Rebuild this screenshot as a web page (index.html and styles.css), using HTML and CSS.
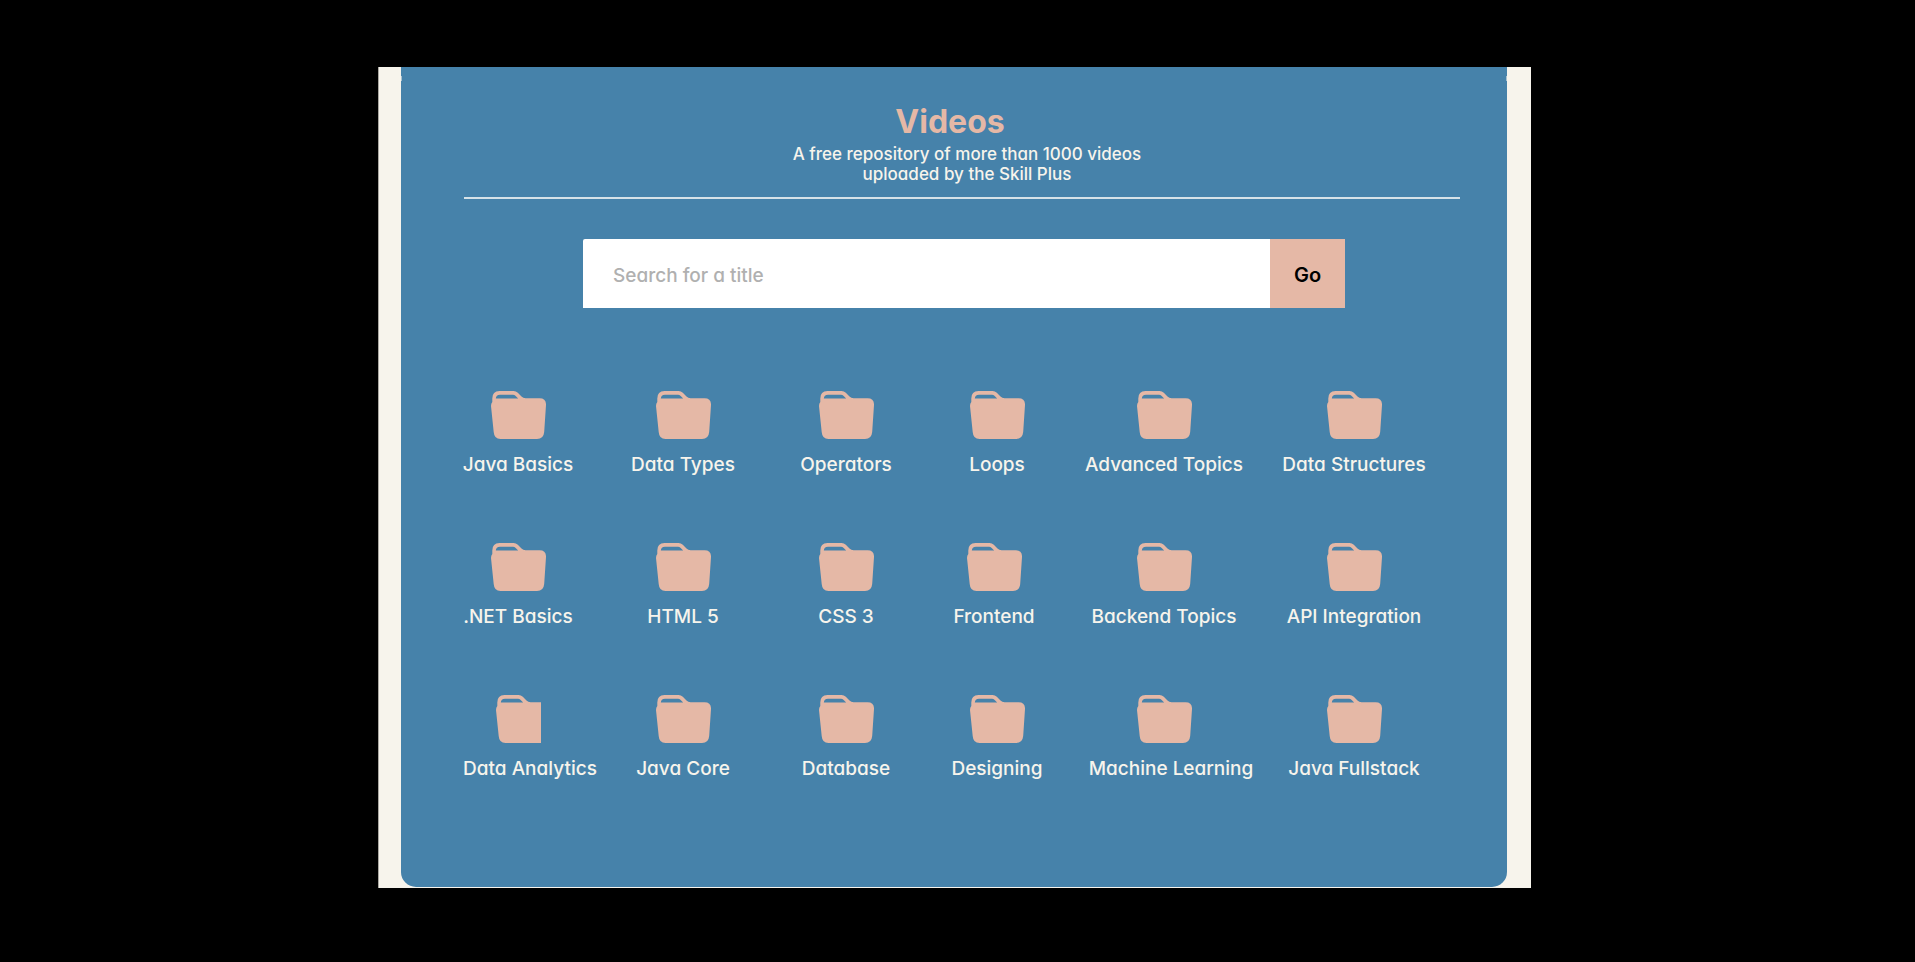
FILE: index.html
```html
<!DOCTYPE html>
<html lang="en">
<head>
<meta charset="utf-8">
<title>Videos</title>
<link rel="stylesheet" href="styles.css">
</head>
<body>
<svg class="sprite" aria-hidden="true">
  <symbol id="folder" viewBox="0 0 55 48" preserveAspectRatio="xMinYMin slice">
    <path fill-rule="evenodd" d="M1.3 11V7.500Q1.300 0 8.500 0H22.500Q25 0 26.800 1.800L30.500 5.600Q32.200 7.300 34.500 7.300H48.500Q55.300 7.300 55 14L53.200 41Q52.600 48 46 48H9.500Q3.200 48 2.700 41L0 15Q0 12.500 1.300 11ZM4.800 7.600H27.200L24.400 4.700Q23.500 3.700 22 3.700H9Q5 3.700 4.800 7.600Z"/>
  </symbol>
</svg>
<div class="frame">
  <main class="panel">
    <header class="intro">
      <h1 class="title">Videos</h1>
      <p class="subtitle">A free repository of more than 1000 videos<br>uploaded by the Skill Plus</p>
    </header>
    <form class="search">
      <input class="search-input" type="text" placeholder="Search for a title" aria-label="Search for a title">
      <button class="search-button" type="button">Go</button>
    </form>
    <nav class="folders" aria-label="Video folders">
      <a class="folder" href="#"><svg class="icon"><use href="#folder"/></svg><span class="label">Java Basics</span></a>
      <a class="folder" href="#"><svg class="icon"><use href="#folder"/></svg><span class="label">Data Types</span></a>
      <a class="folder" href="#"><svg class="icon"><use href="#folder"/></svg><span class="label">Operators</span></a>
      <a class="folder" href="#"><svg class="icon"><use href="#folder"/></svg><span class="label">Loops</span></a>
      <a class="folder" href="#"><svg class="icon"><use href="#folder"/></svg><span class="label">Advanced Topics</span></a>
      <a class="folder" href="#"><svg class="icon"><use href="#folder"/></svg><span class="label">Data Structures</span></a>
      <a class="folder" href="#"><svg class="icon"><use href="#folder"/></svg><span class="label">.NET Basics</span></a>
      <a class="folder" href="#"><svg class="icon"><use href="#folder"/></svg><span class="label">HTML 5</span></a>
      <a class="folder" href="#"><svg class="icon"><use href="#folder"/></svg><span class="label">CSS 3</span></a>
      <a class="folder folder-left" href="#"><svg class="icon"><use href="#folder"/></svg><span class="label">Frontend</span></a>
      <a class="folder" href="#"><svg class="icon"><use href="#folder"/></svg><span class="label">Backend Topics</span></a>
      <a class="folder" href="#"><svg class="icon"><use href="#folder"/></svg><span class="label">API Integration</span></a>
      <a class="folder" href="#"><svg class="icon icon-clipped"><use href="#folder"/></svg><span class="label label-wide">Data Analytics</span></a>
      <a class="folder" href="#"><svg class="icon"><use href="#folder"/></svg><span class="label">Java Core</span></a>
      <a class="folder" href="#"><svg class="icon"><use href="#folder"/></svg><span class="label">Database</span></a>
      <a class="folder" href="#"><svg class="icon"><use href="#folder"/></svg><span class="label">Designing</span></a>
      <a class="folder" href="#"><svg class="icon"><use href="#folder"/></svg><span class="label label-long">Machine Learning</span></a>
      <a class="folder" href="#"><svg class="icon"><use href="#folder"/></svg><span class="label">Java Fullstack</span></a>
    </nav>
  </main>
</div>
</body>
</html>
```

FILE: styles.css
```css
* {
  box-sizing: border-box;
}

body {
  display: grid;
  grid-template-columns: 378fr 1153fr 384fr;
  margin: 0;
  padding: 67px 0 0;
  background: #000;
  color: #f7f4ec;
  font-family: Inter, "Noto Sans", sans-serif;
  font-feature-settings: "cv11";
}

.sprite {
  position: absolute;
  width: 0;
  height: 0;
}

.frame {
  grid-column: 2;
  padding: 0 24px 1px 22px;
  border-left: 1px solid #aaa8a1;
  background: #f7f4ec;
}

.panel {
  position: relative;
  padding: 35px 47px 106px 63px;
  border-radius: 0 0 15px 15px;
  background: #4682aa;
}

.panel::before,
.panel::after {
  content: "";
  position: absolute;
  top: 9px;
  width: 1px;
  height: 5px;
  background: #a9c2d0;
}

.panel::before {
  left: 0;
}

.panel::after {
  right: 0;
}

.intro {
  padding-bottom: 13px;
  border-bottom: 2px solid #d6e2e8;
  text-align: center;
}

.title {
  margin: 0 24px 2px 0;
  color: #e5b8a6;
  font-size: 32px;
  font-weight: 700;
  line-height: 40px;
}

.subtitle {
  margin: 0 0 0 10px;
  font-size: 17px;
  font-weight: 500;
  line-height: 20px;
}

.search {
  display: flex;
  height: 69px;
  margin: 40px 115px 83px 119px;
}

.search-input {
  flex: 1;
  min-width: 0;
  padding: 3px 30px 0;
  border: 0;
  border-radius: 2px 0 0 0;
  background: #fff;
  color: #000;
  font: inherit;
  font-feature-settings: inherit;
  font-size: 19px;
  font-weight: 500;
}

.search-input::placeholder {
  color: #b0b0b0;
  opacity: 1;
}

.search-button {
  width: 75px;
  padding: 3px 0 0;
  border: 0;
  background: #e5b8a6;
  color: #000;
  font: inherit;
  font-size: 20px;
  font-weight: 600;
}

.folders {
  display: grid;
  grid-template-columns: 164fr 166fr 160fr 142fr 192fr 188fr;
  row-gap: 66px;
  margin: 0 12px 0 -28px;
}

.folder {
  display: flex;
  flex-direction: column;
  align-items: center;
  gap: 14px;
  color: inherit;
  text-decoration: none;
}

.folder-left {
  padding-right: 6px;
}

.icon {
  width: 55px;
  height: 48px;
  fill: #e5b8a6;
}

.icon-clipped {
  width: 45px;
}

.label {
  font-size: 19px;
  font-weight: 500;
  line-height: 24px;
  white-space: nowrap;
}

.label-wide {
  margin-left: 24px;
}

.label-long {
  margin-left: 14px;
}
```
